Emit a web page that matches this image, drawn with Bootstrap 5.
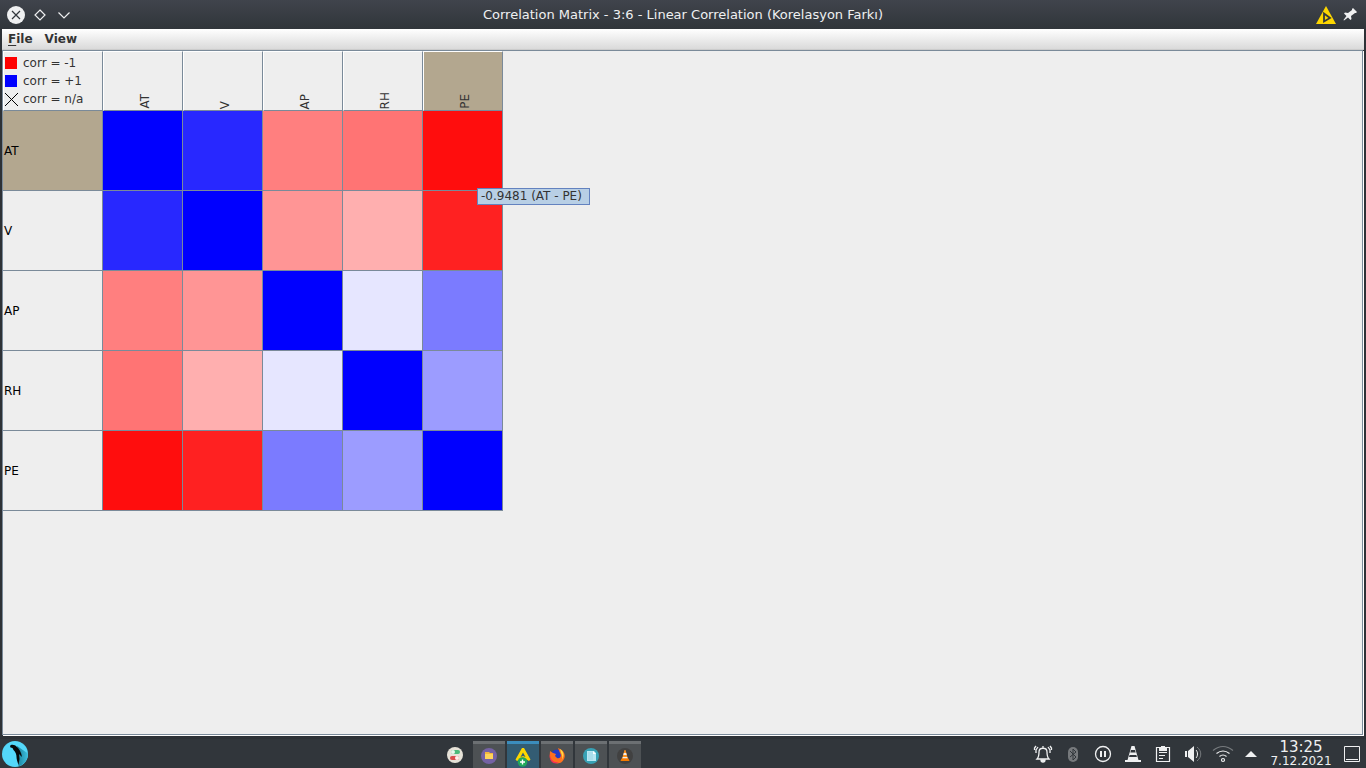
<!DOCTYPE html>
<html lang="en">
<head>
<meta charset="utf-8">
<meta name="viewport" content="width=device-width, initial-scale=1">
<title>Correlation Matrix</title>
<link href="https://cdn.jsdelivr.net/npm/bootstrap@5.3.0/dist/css/bootstrap.min.css" rel="stylesheet">
<style>
body{font-family:"DejaVu Sans",sans-serif;font-size:12px;line-height:18px;color:#333;background:#2d3136}
button{background:none;border:0;padding:0;color:inherit;font:inherit}
svg{display:block}
.titlebar{height:29px;background:linear-gradient(#40444c,#30353a);color:#eff0f1;display:grid;grid-template-columns:1fr auto 1fr}
.titlebar h1{font-size:13px;line-height:18px;font-weight:400}
.window-frame{margin:0 2px 3px}
.menubar{height:21px;padding:0 6px;gap:12px;background:linear-gradient(#fff,#dadada);border-bottom:1px solid #ccc}
.menubar button{font-weight:700;line-height:18px}
.menubar u{text-underline-offset:2px}
.pane{background:#eee;border:1px solid #7a8a99;margin-right:1px;margin-bottom:1px;box-shadow:1px 1px 0 #fff}
.matrix{border-collapse:separate;border-spacing:0;table-layout:fixed;width:500px}
.matrix th,.matrix td{border-right:1px solid #7a8a99;border-bottom:1px solid #7a8a99;padding:0;font-weight:400}
.matrix thead th{height:60px;border-top:1px solid #fff;border-left:1px solid #fff}
.matrix .key-col{width:100px}
.matrix tbody tr{height:80px}
.matrix tbody th{color:#000;padding-left:1px;vertical-align:middle}
.matrix .hot{background:#b3a78f}
.matrix .turned{vertical-align:bottom}
.turned span{display:block;writing-mode:vertical-rl;transform:rotate(180deg);margin:0 auto 1px 32px;width:18px}
.legend-list{padding:2px 1px}
.legend-row{display:flex;align-items:center;gap:6px}
.swatch{width:12px;height:12px;flex:none}
.value-tip{position:absolute;left:474px;top:137px;width:113px;height:17px;line-height:15px;padding:0 3px;background:#b8cfe5;border:1px solid #6382bf;white-space:nowrap}
.panel-bar{height:29px;background:#31363b;color:#eff0f1}
.start-area{width:32.15%}
.tasks{column-gap:2px;padding-top:2px}
.task{width:32px;height:27px;background:#4d5154;border-top:3px solid #6c7073}
.task.current{background:#335c73;border-color:#3b8dbd}
.tray button{width:30px;height:29px}
.tray .arrow{width:26px}
.tray .desk{width:28px}
.clock{width:74px;text-align:center}
.clock .hour{font-size:15px;line-height:15px}
.clock .day{font-size:12px;line-height:12px}
</style>
</head>
<body>
<div class="vh-100 d-flex flex-column overflow-hidden">
<header class="titlebar align-items-center flex-shrink-0">
 <div class="d-flex align-items-center ps-1">
  <button aria-label="Close"><svg width="24" height="24" viewBox="0 0 24 24"><circle cx="12" cy="12" r="9" fill="#eff0f1"/><path d="M8 8l8 8M16 8l-8 8" stroke="#31363b" stroke-width="1.2"/></svg></button>
  <button aria-label="Maximize"><svg width="24" height="24" viewBox="0 0 24 24" fill="none" stroke="#eff0f1" stroke-width="1.2"><path d="M12 7l5 5-5 5-5-5z"/></svg></button>
  <button aria-label="Minimize"><svg width="24" height="24" viewBox="0 0 24 24" fill="none" stroke="#eff0f1" stroke-width="1.2"><path d="M6.500 9.500l5.500 5.500 5.500-5.500"/></svg></button>
 </div>
 <h1 class="m-0">Correlation Matrix - 3:6 - Linear Correlation (Korelasyon Farkı)</h1>
 <div class="d-flex justify-content-end align-items-center pe-1">
  <button aria-label="Application menu"><svg width="24" height="24" viewBox="0 0 24 24"><path d="M12 3L22 21H2z" fill="#fdd600"/><path d="M10 10.500l6 4.500-6 3.500z" fill="#fdd600" stroke="#34383c" stroke-width="1.800"/></svg></button>
  <button aria-label="Keep on all desktops"><svg width="24" height="24" viewBox="0 0 24 24" fill="#eff0f1"><path d="M15 5l4 4-1 1h-1l-4 3 .500 3-1 1-2.500-2.500-4 3-.5-.5 3-4L6 10.500l1-1 3 .5 4-3V6z"/></svg></button>
 </div>
</header>
<div class="window-frame flex-grow-1 d-flex flex-column">
 <nav class="menubar d-flex align-items-center flex-shrink-0">
  <button><u>F</u>ile</button>
  <button>View</button>
 </nav>
 <main class="pane position-relative flex-grow-1">
  <table class="matrix">
   <colgroup><col class="key-col"><col><col><col><col><col></colgroup>
   <thead><tr>
    <th class="align-top">
     <div class="legend-list">
      <div class="legend-row"><svg class="swatch" viewBox="0 0 12 12"><path fill="red" d="M0 0h12v12H0z"/></svg><span>corr = -1</span></div>
      <div class="legend-row"><svg class="swatch" viewBox="0 0 12 12"><path fill="#00f" d="M0 0h12v12H0z"/></svg><span>corr = +1</span></div>
      <div class="legend-row"><svg class="swatch overflow-visible" viewBox="0 0 12 12"><path d="M0 0l13 13M13 0L0 13" stroke="#000"/></svg><span>corr = n/a</span></div>
     </div>
    </th>
    <th class="turned"><span>AT</span></th><th class="turned"><span>V</span></th><th class="turned"><span>AP</span></th><th class="turned"><span>RH</span></th><th class="turned hot"><span>PE</span></th>
   </tr></thead>
   <tbody>
    <tr><th class="hot">AT</th><td style="background:#0000ff"></td><td style="background:#2828ff"></td><td style="background:#ff7f7f"></td><td style="background:#ff7474"></td><td style="background:#ff0d0d"></td></tr>
    <tr><th>V</th><td style="background:#2828ff"></td><td style="background:#0000ff"></td><td style="background:#ff9595"></td><td style="background:#ffafaf"></td><td style="background:#ff2121"></td></tr>
    <tr><th>AP</th><td style="background:#ff7f7f"></td><td style="background:#ff9595"></td><td style="background:#0000ff"></td><td style="background:#e6e6ff"></td><td style="background:#7b7bff"></td></tr>
    <tr><th>RH</th><td style="background:#ff7474"></td><td style="background:#ffafaf"></td><td style="background:#e6e6ff"></td><td style="background:#0000ff"></td><td style="background:#9c9cff"></td></tr>
    <tr><th>PE</th><td style="background:#ff0d0d"></td><td style="background:#ff2121"></td><td style="background:#7b7bff"></td><td style="background:#9c9cff"></td><td style="background:#0000ff"></td></tr>
   </tbody>
  </table>
  <div class="value-tip" role="tooltip">-0.9481 (AT - PE)</div>
 </main>
</div>
<footer class="panel-bar d-flex flex-shrink-0">
 <div class="start-area"><button aria-label="Application launcher"><svg width="30" height="29" viewBox="0 0 30 29"><defs><linearGradient id="shade" x1="0" x2="1"><stop stop-color="#177f99"/><stop offset="1" stop-color="#3fc0e0"/></linearGradient></defs><circle cx="15" cy="15" r="13" fill="#54d8fa"/><path d="M17 7l11 7.500A13 13 0 0 1 18.500 27.500L18 15z" fill="url(#shade)"/><path d="M10 7c1-2 5-1.500 7 1 2 2 4.500 5.500 5 10l-3-3 .5 5-1 6c-1-3-2-6-2-8 0-3-1-5-3-7l-1-2-2-.5z" fill="#07090a"/></svg></button></div>
 <div class="tasks d-flex align-items-start">
  <button class="task border-0 bg-transparent" aria-label="Settings"><svg class="mx-auto" width="24" height="24" viewBox="0 0 24 24"><circle cx="12" cy="12" r="8" fill="#e6e2d8"/><rect x="8" y="7" width="9" height="4" rx="2" fill="#4cba7a"/><circle cx="10" cy="9" r="2" fill="#e9f7ee"/><rect x="7" y="13" width="9" height="4" rx="2" fill="#d84d4d"/><circle cx="14" cy="15" r="2" fill="#fff0ee"/></svg></button>
  <button class="task" aria-label="Files"><svg class="mx-auto" width="24" height="22" viewBox="0 1 24 22"><circle cx="12" cy="12" r="8" fill="#7562a4"/><path d="M8 8h4l1 1h3v6H8z" fill="#f3b63d"/><path d="M8 10h8v5H8z" fill="#ffd35a"/></svg></button>
  <button class="task current" aria-label="KNIME"><svg class="mx-auto" width="24" height="22" viewBox="0 1 24 22"><path d="M11 4h2l6.500 11.500-1.500 1.500-6-3.500L6 17l-1.500-1.500z" fill="#fdd600"/><path d="M12 8.500l2.500 4.500-2.500-1-2.500 1z" fill="#335c73"/><circle cx="11.500" cy="18" r="4.800" fill="#20a85b"/><path d="M11.500 15.500v5M9 18h5" stroke="#fff" stroke-width="1.400"/></svg></button>
  <button class="task" aria-label="Firefox"><svg class="mx-auto" width="24" height="22" viewBox="0 1 24 22"><circle cx="12" cy="12" r="6.500" fill="#263bc4"/><path d="M5 7l3 2 3 1-1 2 2 2c3 1 5-2 3-5l-2-5c6 2 8 7 6 11-3 7-13 5-14-1-.5-3 0-5 0-7z" fill="#ff701e"/><path d="M15 5c5 3 4 9 1 12 3-4 0-7-1-12z" fill="#ffdd43"/><path d="M5 10c0 6 4 9 9 8-5 4-11-2-9-8z" fill="#f32e57"/></svg></button>
  <button class="task" aria-label="Text editor"><svg class="mx-auto" width="24" height="22" viewBox="0 1 24 22"><circle cx="12" cy="12" r="8" fill="#38a1b5"/><path d="M8 7h7l2 2v8H8z" fill="#b9e7f4"/><path d="M9 9h5M9 11h5M9 13h5M9 15h5" stroke="#91cddd" stroke-width=".7"/><path d="M14 7v3h3z" fill="#fff"/></svg></button>
  <button class="task" aria-label="VLC"><svg class="mx-auto" width="24" height="22" viewBox="0 1 24 22"><circle cx="12" cy="12" r="8" fill="#414141"/><path d="M11.500 6h1L15 15H9z" fill="#ff941f"/><path d="M10.800 9h2.400l.5 2h-3.400zM9.800 13h4.400l.5 1.500h-5.400z" fill="#eee"/><path d="M8.500 14.500h7l1 2.500h-9z" fill="#f57b00"/></svg></button>
 </div>
 <div class="tray d-flex align-items-center ms-auto">
  <button aria-label="Notifications"><svg class="mx-auto" width="22" height="22" viewBox="0 0 22 22" fill="none" stroke="#eff0f1" stroke-width="1.300"><path d="M5 16c2-2 2-4 2-7 0-5 8-5 8 0 0 3 0 5 2 7zM11 3v2M6 4L4 7v3M16 4l2 3v3M4 3L2.500 5v2M18 3l1.500 2v2"/><path d="M9 17h4a2 2 0 0 1-4 0z" fill="#eff0f1"/></svg></button>
  <button aria-label="Bluetooth"><svg class="mx-auto" width="22" height="22" viewBox="0 0 22 22"><rect x="6" y="4" width="10" height="15" rx="5" fill="#76797c"/><path d="M8 8l6 6-3 3V6l3 3-6 5" fill="none" stroke="#31363b"/></svg></button>
  <button aria-label="Pause"><svg class="mx-auto" width="22" height="22" viewBox="0 0 22 22"><circle cx="11" cy="11" r="7.500" fill="none" stroke="#eff0f1" stroke-width="1.300"/><path d="M8 8h2v6H8zM12 8h2v6h-2z" fill="#eff0f1"/></svg></button>
  <button aria-label="VLC media player"><svg class="mx-auto" width="22" height="22" viewBox="0 0 22 22"><path d="M9.500 3h3l4 14h-11z" fill="#eff0f1"/><path d="M9 7h4l.7 2.500H8.300zM7.600 12h6.800l.5 2H7z" fill="#31363b"/><path d="M3 17h16v2H3z" fill="#eff0f1"/></svg></button>
  <button aria-label="Clipboard"><svg class="mx-auto" width="22" height="22" viewBox="0 0 22 22"><path d="M4.500 4.500h13v14h-13zM7 9.500h8M7 12.500h6M7 15.500h4" fill="none" stroke="#eff0f1" stroke-width="1.200"/><path d="M7 4h2V3h4v1h2v4H7z" fill="#eff0f1"/></svg></button>
  <button aria-label="Volume"><svg class="mx-auto" width="22" height="22" viewBox="0 0 22 22"><path d="M3 8h2v6H3zM6 8l6-5v16l-6-5z" fill="#eff0f1"/><path d="M14 7c2 2 2 6 0 8" fill="none" stroke="#eff0f1"/><path d="M15 4c5 4 5 10 0 14" fill="none" stroke="#777b7e"/></svg></button>
  <button aria-label="Wireless network"><svg class="mx-auto" width="22" height="22" viewBox="0 0 22 22" fill="none" stroke="#eff0f1" stroke-width="1.200"><circle cx="11" cy="17" r="1.500"/><path d="M7.500 13.500q3.500-3 7 0M4.500 10.500q6.500-5 13 0"/><path d="M1 7.500q10-8 20 0" stroke="#777b7e"/></svg></button>
  <button class="arrow" aria-label="Show hidden icons"><svg class="mx-auto" width="22" height="22" viewBox="0 0 22 22"><path d="M5 14l6-6 6 6z" fill="#eff0f1"/></svg></button>
  <div class="clock"><div class="hour">13:25</div><div class="day">7.12.2021</div></div>
  <button class="desk" aria-label="Show desktop"><svg class="mx-auto" width="22" height="22" viewBox="0 0 22 22"><path d="M3.500 3.500h15v15h-15zM5 16.500h12" fill="none" stroke="#eff0f1"/></svg></button>
 </div>
</footer>
</div>
<script src="https://cdn.jsdelivr.net/npm/bootstrap@5.3.0/dist/js/bootstrap.bundle.min.js"></script>
</body>
</html>
